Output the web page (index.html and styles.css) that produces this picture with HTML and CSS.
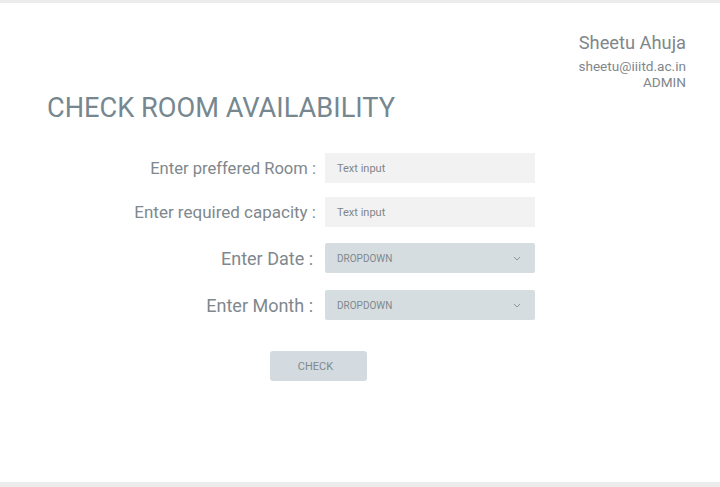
FILE: index.html
```html
<!DOCTYPE html>
<html>
<head>
<meta charset="utf-8">
<link rel="stylesheet" href="styles.css">
</head>
<body>
<div class="page">
  <header class="user">
    <div class="user-name">Sheetu Ahuja</div>
    <div class="user-mail">sheetu@iiitd.ac.in</div>
    <div class="user-role">ADMIN</div>
  </header>
  <h1 class="title">CHECK ROOM AVAILABILITY</h1>
  <form class="form">
    <label class="label">Enter preffered Room :</label>
    <div class="input">Text input</div>
    <label class="label label-wide">Enter required capacity :</label>
    <div class="input">Text input</div>
    <label class="label label-lg row-date">Enter Date :</label>
    <div class="select row-date"><span>DROPDOWN</span><svg width="8" height="5" viewBox="0 0 8 5"><path d="M1 1 L4 4 L7 1" fill="none" stroke="#8a949a" stroke-width="1"/></svg></div>
    <label class="label label-lg row-month">Enter Month :</label>
    <div class="select row-month"><span>DROPDOWN</span><svg width="8" height="5" viewBox="0 0 8 5"><path d="M1 1 L4 4 L7 1" fill="none" stroke="#8a949a" stroke-width="1"/></svg></div>
  </form>
  <div class="actions"><button class="btn" type="button">CHECK</button></div>
</div>
</body>
</html>
```

FILE: styles.css
```css
* { box-sizing: border-box; }
html, body { margin: 0; padding: 0; }
body {
  width: 720px;
  height: 487px;
  background: #ffffff;
  font-family: Roboto, "Liberation Sans", sans-serif;
  overflow: hidden;
}
.page {
  height: 487px;
  border-top: 3px solid #ececec;
  border-bottom: 5px solid #ececec;
}
.user {
  text-align: right;
  padding: 29px 34px 0 0;
  color: #7f878c;
}
.user-name { font-size: 18.3px; line-height: 22px; }
.user-mail { font-size: 13.6px; line-height: 16px; margin-top: 4px; }
.user-role { font-size: 13.6px; line-height: 16px; }
.title {
  margin: 2px 0 0 47px;
  font-weight: 400;
  font-size: 27.2px;
  line-height: 33px;
  color: #76878f;
}
.form {
  display: grid;
  grid-template-columns: 316px 210px;
  column-gap: 9px;
  row-gap: 14px;
  margin-top: 28px;
  align-items: center;
}
.label {
  text-align: right;
  font-size: 16.6px;
  color: #80888d;
}
.label-wide { font-size: 17px; }
.label-lg { font-size: 18px; padding-right: 3px; }
.input {
  height: 30px;
  background: #f2f2f2;
  font-size: 11px;
  color: #80868a;
  padding: 0 11px 0 12px;
  display: flex;
  align-items: center;
}
.select {
  height: 30px;
  background: #d5dde1;
  border-radius: 2px;
  font-size: 10px;
  color: #80888d;
  padding: 0 14px 0 12px;
  display: flex;
  align-items: center;
  justify-content: space-between;
}
.row-date { margin-top: 2px; }
.row-month { margin-top: 3px; }
.actions {
  margin-top: 31px;
  padding-left: 270px;
}
.btn {
  width: 97px;
  height: 30px;
  background: #d3dbe0;
  border: none;
  border-radius: 3px;
  font-family: Roboto, "Liberation Sans", sans-serif;
  font-size: 11px;
  color: #80888d;
  padding: 0 6px 0 0;
}
```
